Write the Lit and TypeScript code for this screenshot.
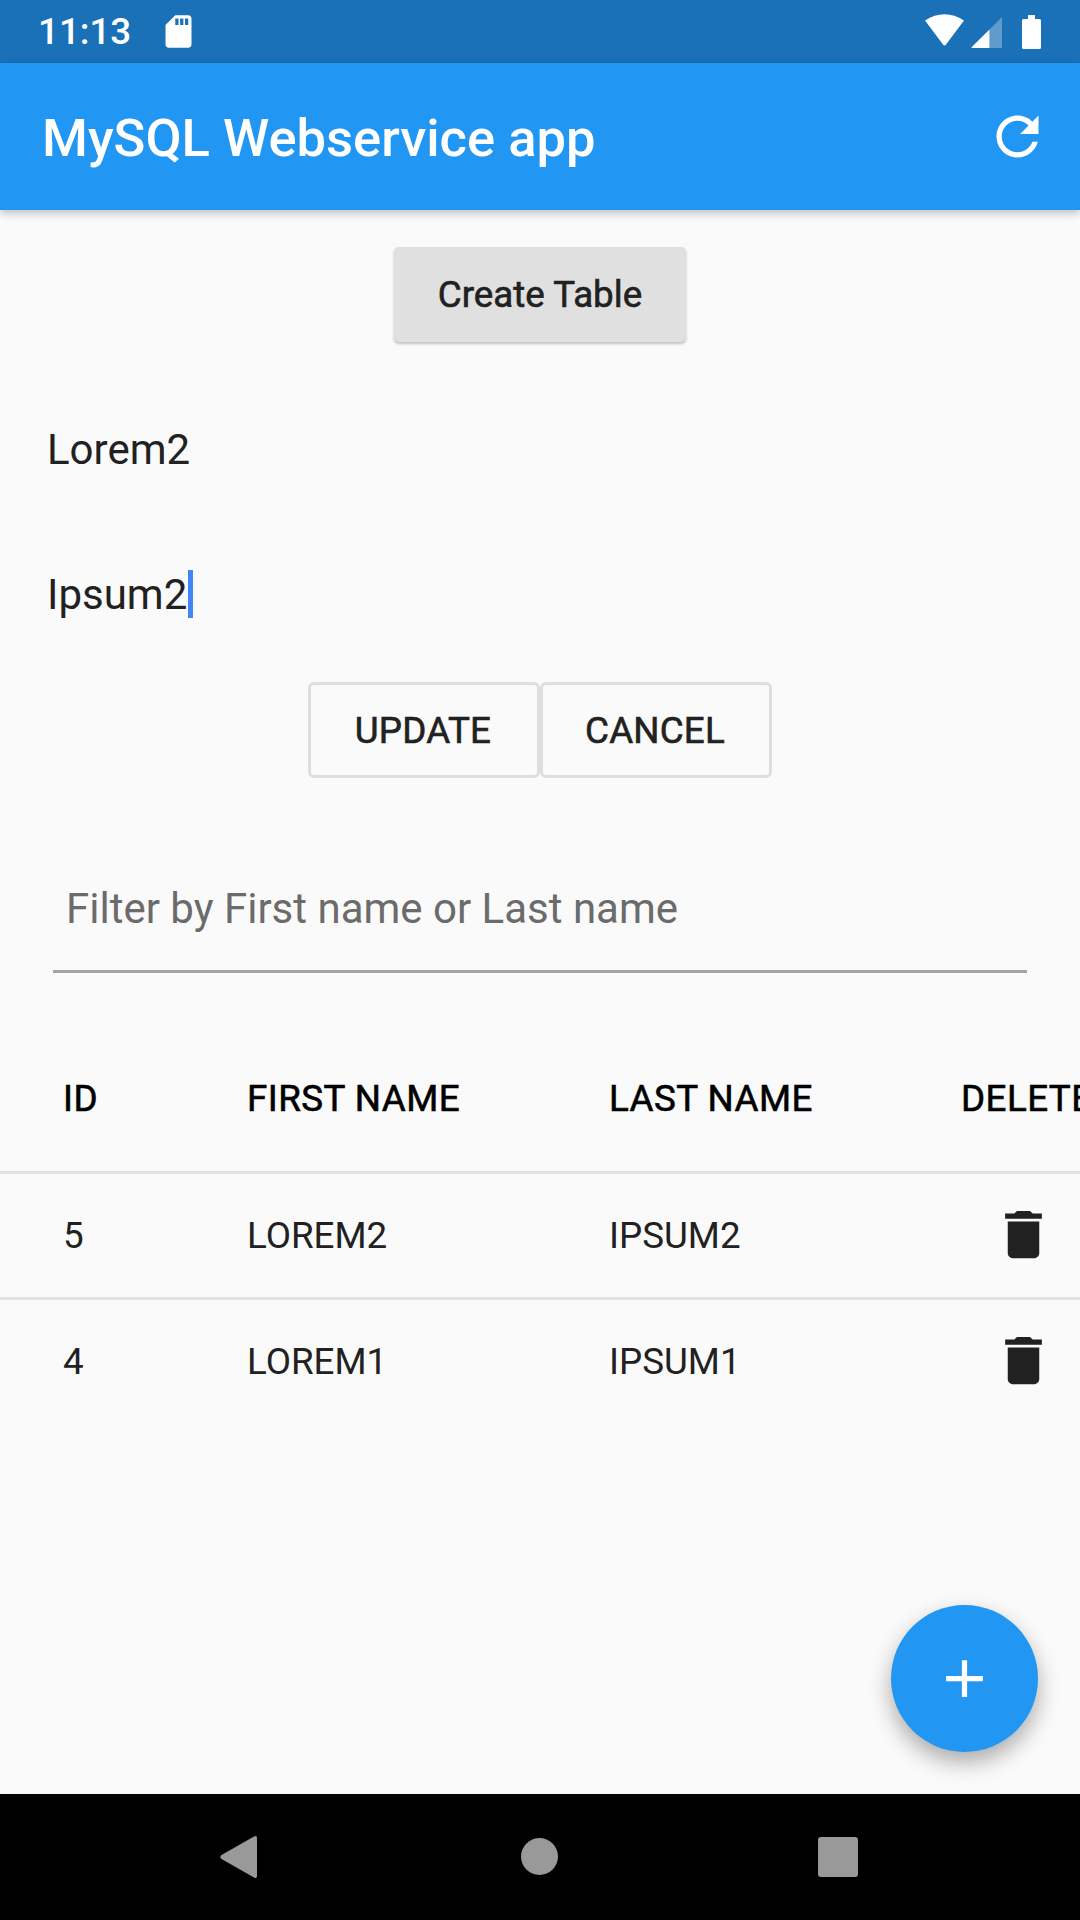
import { LitElement, html, css } from 'lit';
import { customElement } from 'lit/decorators.js';

const rows = [
  { id: '5', first: 'LOREM2', last: 'IPSUM2' },
  { id: '4', first: 'LOREM1', last: 'IPSUM1' },
];

const trash = html`<svg class="trash" viewBox="0 0 24 24" fill="#212121">
  <path d="M6 19c0 1.1.9 2 2 2h8c1.1 0 2-.9 2-2V7H6v12zM19 4h-3.5l-1-1h-5l-1 1H5v2h14V4z" />
</svg>`;

@customElement('app-root')
export class AppRoot extends LitElement {
  static styles = css`
    :host {
      display: flex;
      flex-direction: column;
      width: 1080px;
      height: 1920px;
      overflow: hidden;
      background: #fafafa;
      font-family: Roboto, sans-serif;
      color: #212121;
    }

    .status {
      flex: none;
      height: 63px;
      background: #1a71b8;
      display: flex;
      align-items: center;
      padding: 0 39px 0 38px;
      box-sizing: border-box;
      color: #fff;
    }
    .time {
      font-size: 36.75px;
      font-weight: 500;
      width: 120.5px;
    }
    .sd {
      width: 39px;
      height: 39px;
    }
    .status-right {
      margin-left: auto;
      display: flex;
      align-items: center;
      gap: 6px;
    }
    .wifi {
      margin-top: -3px;
    }
    .battery {
      margin-left: 14px;
    }

    .appbar {
      flex: none;
      height: 147px;
      background: #2196f3;
      display: flex;
      align-items: center;
      justify-content: space-between;
      padding: 3px 31px 0 42px;
      box-sizing: border-box;
      color: #fff;
      box-shadow: 0 3px 8px rgba(0, 0, 0, 0.25);
      position: relative;
    }
    .title {
      font-size: 52.5px;
      font-weight: 500;
    }
    .refresh {
      width: 63px;
      height: 63px;
      margin-top: -3px;
      fill: #fff;
    }

    main {
      flex: 1;
      position: relative;
      display: flex;
      flex-direction: column;
      min-height: 0;
    }
    .create-wrap {
      display: flex;
      justify-content: center;
      padding-top: 37px;
    }
    .create {
      width: 292px;
      height: 94.5px;
      display: flex;
      align-items: center;
      justify-content: center;
      background: #e0e0e0;
      border-radius: 5px;
      box-shadow: 0 2px 3px rgba(0, 0, 0, 0.24);
      font-size: 36.75px;
      -webkit-text-stroke: 0.6px currentColor;
    }
    .field {
      height: 50px;
      display: flex;
      align-items: center;
      padding-left: 47px;
      font-size: 42px;
    }
    .field.lorem {
      margin-top: 82.5px;
    }
    .field.ipsum {
      margin-top: 95px;
    }
    .caret {
      width: 5px;
      height: 48px;
      background: #4285f4;
      margin-left: 1px;
    }
    .actions {
      display: flex;
      justify-content: center;
      margin-top: 63px;
    }
    .outline {
      width: 232px;
      height: 96px;
      padding: 0 2px 0 0;
      box-sizing: border-box;
      display: flex;
      align-items: center;
      justify-content: center;
      border: 3px solid #dedede;
      border-radius: 6px;
      font-size: 36.75px;
      letter-spacing: 0.2px;
      -webkit-text-stroke: 0.6px currentColor;
    }
    .search {
      margin: 77px 53px 0;
      height: 118px;
      box-sizing: border-box;
      border-bottom: 3px solid #a3a3a3;
      padding: 29px 0 0 13px;
      font-size: 42px;
      line-height: 50px;
      color: #6b6b6b;
    }
    .table {
      margin-top: 54px;
      overflow: hidden;
    }
    .row {
      display: flex;
      align-items: center;
      padding-left: 63px;
      height: 126px;
      box-sizing: border-box;
      border-bottom: 3px solid #e2e2e2;
      font-size: 36.75px;
      white-space: nowrap;
    }
    .row:last-child {
      border-bottom-color: transparent;
      padding-bottom: 1px;
    }
    .row.head {
      height: 147px;
      padding-bottom: 2px;
      letter-spacing: 0.45px;
      color: #000;
      -webkit-text-stroke: 0.6px currentColor;
    }
    .id {
      flex: none;
      width: 184px;
    }
    .first {
      flex: none;
      width: 362px;
    }
    .last {
      flex: none;
      width: 352px;
    }
    .del {
      flex: none;
    }
    .trash {
      display: block;
      width: 63px;
      height: 63px;
      margin: -2px 0 0 31px;
    }

    .fab {
      position: absolute;
      right: 42px;
      bottom: 42px;
      width: 147px;
      height: 147px;
      border-radius: 50%;
      background: #2196f3;
      display: flex;
      align-items: center;
      justify-content: center;
      box-shadow: 0 10px 22px rgba(0, 0, 0, 0.32);
    }
    .fab svg {
      width: 63px;
      height: 63px;
      fill: #fff;
    }

    .nav {
      flex: none;
      height: 126px;
      background: #000;
      position: relative;
    }
    .nav svg {
      position: absolute;
      fill: #999;
    }
    .nav .back {
      left: 220px;
      top: 42px;
    }
    .nav .home {
      left: 521px;
      top: 44px;
    }
    .nav .recent {
      left: 818px;
      top: 43px;
    }
  `;

  render() {
    return html`
      <div class="status">
        <span class="time">11:13</span>
        <svg class="sd" viewBox="0 0 24 24" fill="#fff">
          <path d="M18 2h-8L4.020 8 4 20c0 1.100.9 2 2 2h12c1.100 0 2-.9 2-2V4c0-1.100-.9-2-2-2zm-6 6h-2V4h2v4zm3 0h-2V4h2v4zm3 0h-2V4h2v4z" />
        </svg>
        <div class="status-right">
          <svg class="wifi" width="41" height="32" viewBox="0 0 41 32" fill="#fff">
            <path d="M1 6.500Q20.500-6 40 6.500L22 30.500Q20.500 32.500 19 30.500Z" />
          </svg>
          <svg width="31" height="32" viewBox="0 0 31 32" fill="#fff">
            <path d="M18.500 13.500V32H1Q0 32 .8 31Z" />
            <path d="M18.500 13.500L31 1V32H18.500Z" opacity=".3" />
          </svg>
          <svg class="battery" width="19" height="34" viewBox="0 0 19 34" fill="#fff">
            <path d="M6 0h7v4h4.500q1.500 0 1.500 1.500V32.500q0 1.500-1.500 1.500H1.500Q0 34 0 32.500V5.500Q0 4 1.500 4H6Z" />
          </svg>
        </div>
      </div>

      <header class="appbar">
        <span class="title">MySQL Webservice app</span>
        <svg class="refresh" viewBox="0 0 24 24">
          <path d="M17.650 6.350C16.200 4.900 14.210 4 12 4c-4.420 0-7.990 3.580-7.990 8s3.570 8 7.990 8c3.730 0 6.840-2.550 7.730-6h-2.080c-.82 2.330-3.040 4-5.650 4-3.310 0-6-2.690-6-6s2.690-6 6-6c1.660 0 3.140.69 4.220 1.780L13 11h7V4l-2.350 2.350z" />
        </svg>
      </header>

      <main>
        <div class="create-wrap"><div class="create">Create Table</div></div>
        <div class="field lorem">Lorem2</div>
        <div class="field ipsum">Ipsum2<span class="caret"></span></div>
        <div class="actions">
          <div class="outline">UPDATE</div>
          <div class="outline">CANCEL</div>
        </div>
        <div class="search">Filter by First name or Last name</div>
        <div class="table">
          <div class="row head">
            <span class="id">ID</span>
            <span class="first">FIRST NAME</span>
            <span class="last">LAST NAME</span>
            <span class="del">DELETE</span>
          </div>
          ${rows.map(
            (r) => html`
              <div class="row">
                <span class="id">${r.id}</span>
                <span class="first">${r.first}</span>
                <span class="last">${r.last}</span>
                <span class="del">${trash}</span>
              </div>
            `
          )}
        </div>
        <div class="fab">
          <svg viewBox="0 0 24 24"><path d="M19 13h-6v6h-2v-6H5v-2h6V5h2v6h6v2z" /></svg>
        </div>
      </main>

      <nav class="nav">
        <svg class="back" width="37" height="42" viewBox="0 0 37 42">
          <path d="M34 .5Q37-1 37 2V40Q37 43 34 41.500L1.500 23Q-1 21 1.500 19Z" />
        </svg>
        <svg class="home" width="37" height="37" viewBox="0 0 37 37">
          <circle cx="18.500" cy="18.500" r="18.500" />
        </svg>
        <svg class="recent" width="40" height="40" viewBox="0 0 40 40">
          <rect width="40" height="40" rx="3" />
        </svg>
      </nav>
    `;
  }
}

declare global {
  interface HTMLElementTagNameMap {
    'app-root': AppRoot;
  }
}
